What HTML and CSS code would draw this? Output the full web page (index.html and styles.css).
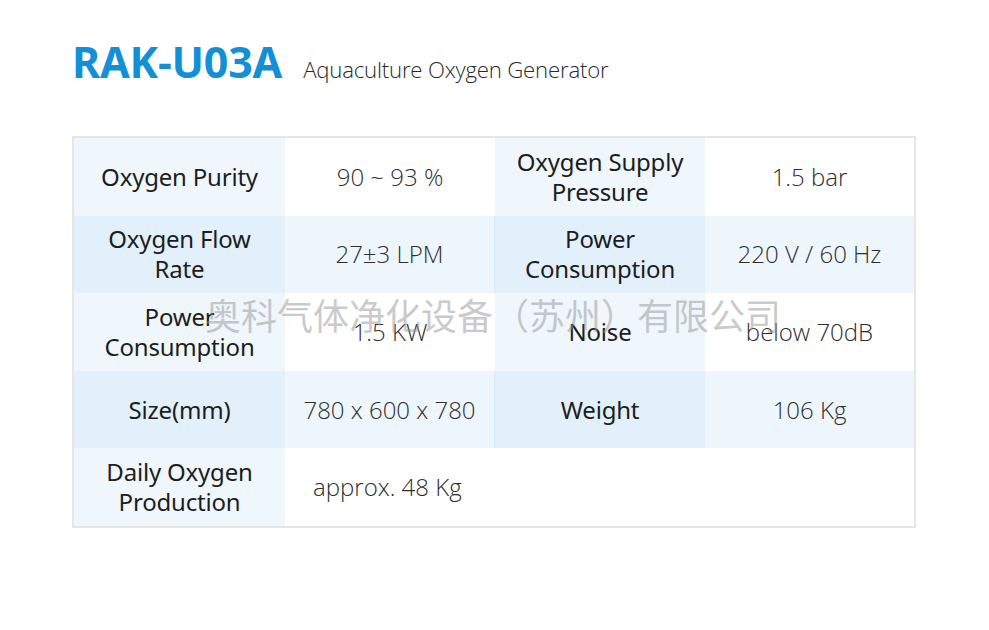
FILE: index.html
```html
<!DOCTYPE html>
<html lang="en">
<head>
<meta charset="utf-8">
<title>RAK-U03A Aquaculture Oxygen Generator</title>
<link rel="stylesheet" href="styles.css">
</head>
<body>
<div class="page">
  <header class="head">
    <h1 class="model">RAK-U03A</h1>
    <span class="subtitle">Aquaculture Oxygen Generator</span>
  </header>
  <div class="specs">
    <div class="cell lbl odd">Oxygen Purity</div>
    <div class="cell val odd">90 ~ 93 %</div>
    <div class="cell lbl odd">Oxygen Supply<br>Pressure</div>
    <div class="cell val odd">1.5 bar</div>

    <div class="cell lbl even">Oxygen Flow<br>Rate</div>
    <div class="cell val even split">27±3 LPM</div>
    <div class="cell lbl even">Power<br>Consumption</div>
    <div class="cell val even">220 V / 60 Hz</div>

    <div class="cell lbl odd">Power<br>Consumption</div>
    <div class="cell val odd">1.5 KW</div>
    <div class="cell lbl odd">Noise</div>
    <div class="cell val odd">below 70dB</div>

    <div class="cell lbl even">Size(mm)</div>
    <div class="cell val even split">780 x 600 x 780</div>
    <div class="cell lbl even">Weight</div>
    <div class="cell val even">106 Kg</div>

    <div class="cell lbl odd">Daily Oxygen<br>Production</div>
    <div class="cell val odd wide">approx. 48 Kg</div>
  </div>
  <div class="watermark">奥科气体净化设备（苏州）有限公司</div>
</div>
</body>
</html>
```
FILE: styles.css
```css
html, body {
  margin: 0;
  padding: 0;
  background: #ffffff;
}
.page {
  position: relative;
  width: 989px;
  height: 630px;
  padding: 32px 0 0 72px;
  box-sizing: border-box;
  font-family: "Noto Sans", "Open Sans", sans-serif;
}
.head {
  display: flex;
  align-items: baseline;
  gap: 21px;
  height: 60px;
}
.model {
  margin: 0;
  font-size: 43px;
  font-weight: 700;
  color: #138fd5;
  letter-spacing: -0.2px;
  line-height: 60px;
}
.subtitle {
  font-family: "Open Sans", "Noto Sans", sans-serif;
  font-size: 22.2px;
  font-weight: 300;
  color: #2a2a2a;
  letter-spacing: -0.2px;
}
.specs {
  margin-top: 44px;
  width: 840px;
  border: 2px solid #e6e6e6;
  display: grid;
  grid-template-columns: 211px 210px 210px 209px;
  grid-template-rows: repeat(5, 77.6px);
}
.cell {
  display: flex;
  align-items: center;
  justify-content: center;
  text-align: center;
  font-size: 24px;
  line-height: 30px;
}
.lbl {
  color: #1d1d1d;
  font-weight: 400;
  letter-spacing: -0.2px;
}
.val {
  font-family: "Open Sans", "Noto Sans", sans-serif;
  color: #2e2e2e;
  font-weight: 300;
}
.lbl.odd { background: #eff7fd; }
.val.odd { background: #ffffff; }
.lbl.even { background: #e2f0fb; }
.val.even { background: #edf6fd; }
.split {
  border-right: 1px solid #d6e8f6;
}
.wide {
  grid-column: 2 / span 3;
  justify-content: flex-start;
  padding-left: 28px;
}
.watermark {
  position: absolute;
  left: 205px;
  top: 296px;
  font-family: "Noto Sans CJK SC", sans-serif;
  font-size: 36px;
  line-height: 36px;
  color: rgba(150, 150, 150, 0.5);
  white-space: nowrap;
  pointer-events: none;
}
```
